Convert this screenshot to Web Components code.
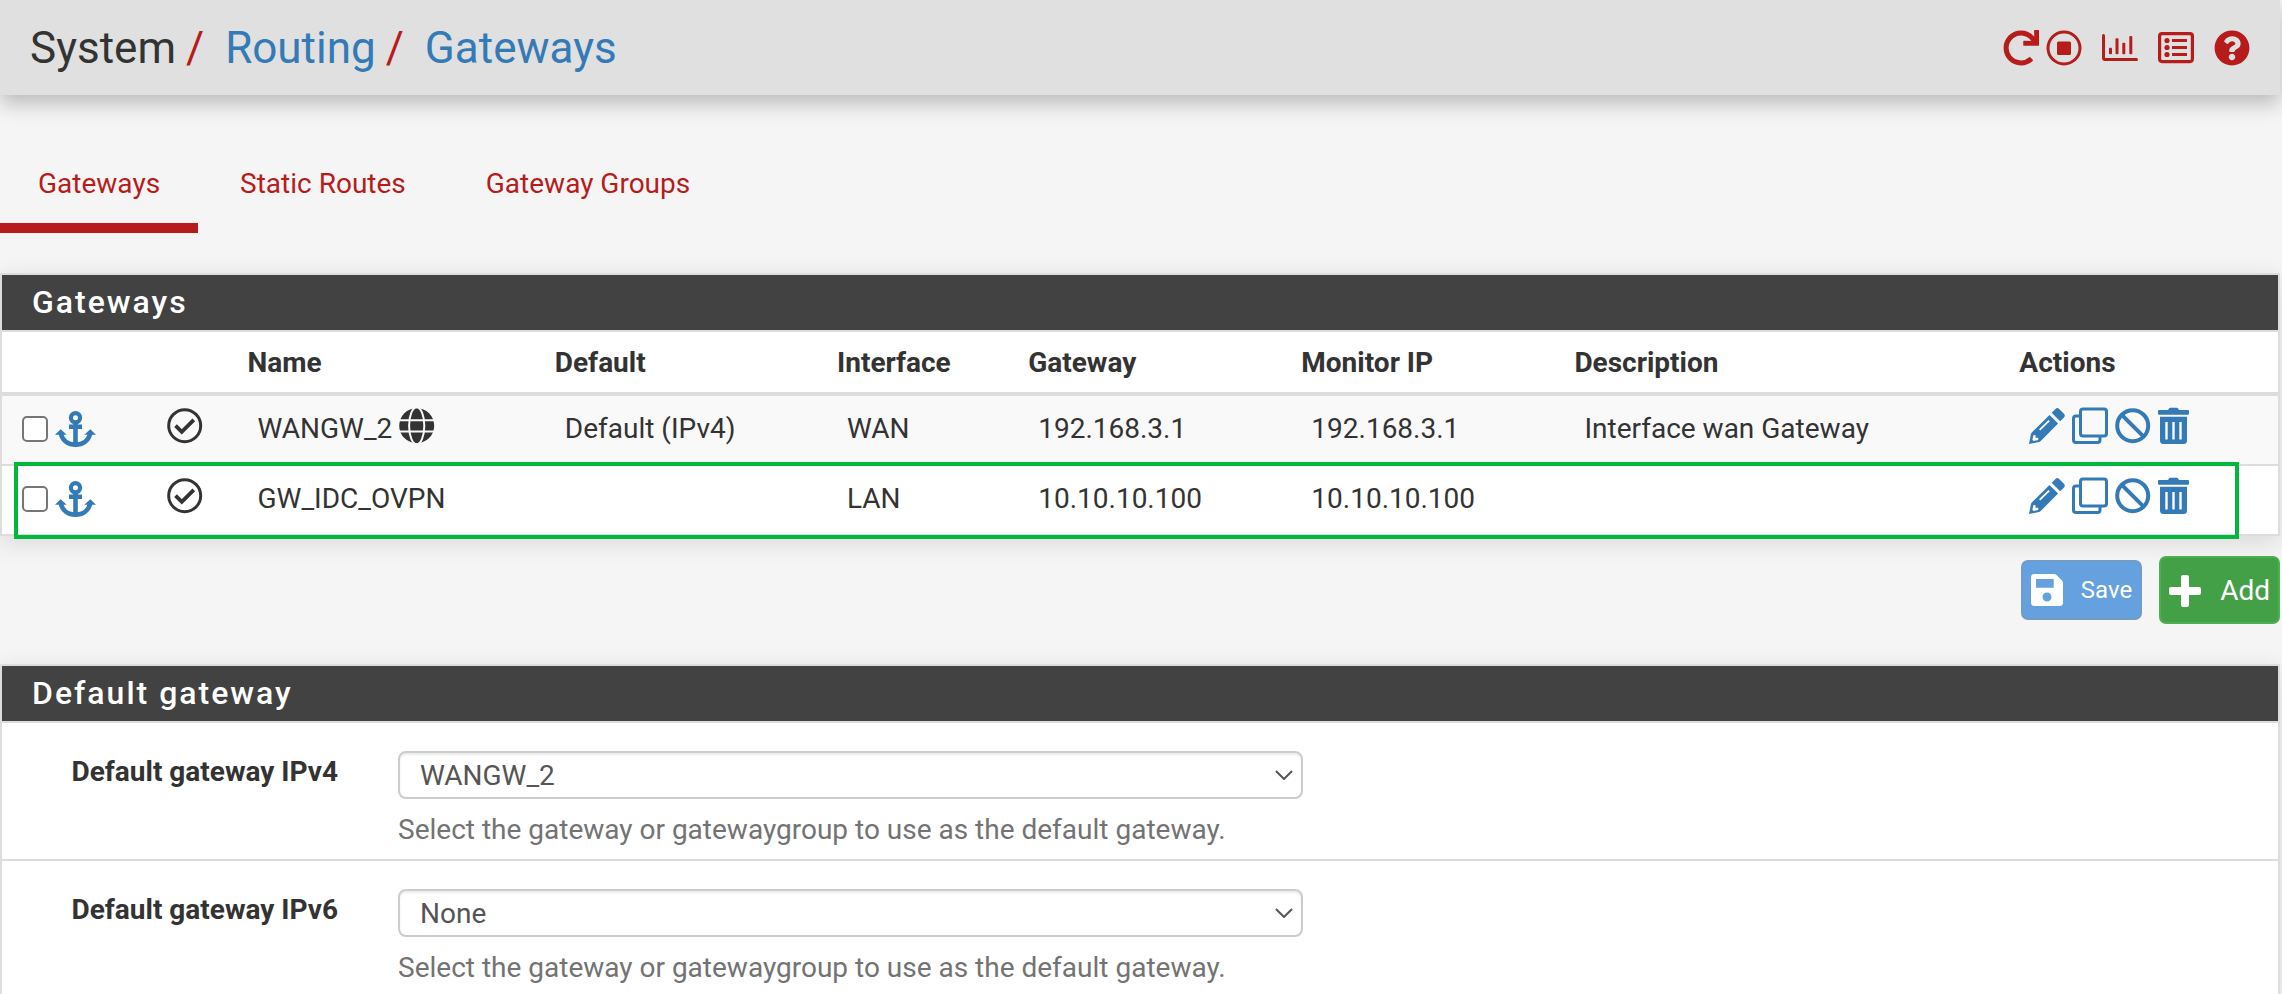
<!DOCTYPE html>
<html lang="en">
<head>
<meta charset="utf-8">
<meta name="viewport" content="width=device-width, initial-scale=1">
<title>System / Routing / Gateways</title>
<style>
  html {
    scrollbar-width: none;
  }
  body {
    margin: 0;
    padding-right: 2px;
    background: #f5f5f5;
    color: #333;
    font: 28px/42px Roboto, sans-serif;
  }
</style>
</head>
<body>
<gateways-page></gateways-page>

<script>
// Icon name -> [width, height, markup]
const ICONS = {
  redo: [36, 36, `<path transform="scale(.0703125)" d="M500.33 0h-47.41a12 12 0 0 0-12 12.57l4 82.76A247.42 247.42 0 0 0 256 8C119.34 8 7.9 119.53 8 256.19 8.1 393.07 119.1 504 256 504a247.1 247.1 0 0 0 166.18-63.91 12 12 0 0 0 .48-17.43l-34-34a12 12 0 0 0-16.38-.55A176 176 0 1 1 402.07 157.8l-101.53-4.87a12 12 0 0 0-12.57 12v47.41a12 12 0 0 0 12 12h200.33a12 12 0 0 0 12-12V12a12 12 0 0 0-12-12z"/>`],
  stop: [36, 36, `<circle cx="18" cy="18" r="16" fill="none" stroke="currentColor" stroke-width="3"/><rect x="11" y="11.500" width="14" height="13.500" rx="1.500"/>`],
  chart: [36, 36, `<path d="M0 5.500a1.500 1.500 0 0 1 3 0V28h31.500a1.500 1.500 0 0 1 0 3H3a3 3 0 0 1-3-3z"/><rect x="7" y="17.700" width="3" height="6.500" rx="1"/><rect x="13.500" y="8.300" width="3" height="16" rx="1"/><rect x="20.300" y="12.700" width="3" height="11.500" rx="1"/><rect x="27.300" y="6" width="3" height="18.200" rx="1"/>`],
  list: [36, 36, `<rect x="1.600" y="3.600" width="32.800" height="28" rx="2.500" fill="none" stroke="currentColor" stroke-width="3.200"/><circle cx="9" cy="10.500" r="2.600"/><circle cx="9" cy="17.500" r="2.600"/><circle cx="9" cy="24.500" r="2.600"/><path d="M14 9h15v3H14zM14 16h15v3H14zM14 23h15v3H14z"/>`],
  help: [36, 36, `<path transform="scale(.0703125)" d="M504 256c0 136.997-111.043 248-248 248S8 392.997 8 256C8 119.083 119.043 8 256 8s248 111.083 248 248zM262.655 90c-54.497 0-89.255 22.957-116.549 63.758-3.536 5.286-2.353 12.415 2.715 16.258l34.699 26.31c5.205 3.947 12.621 3.008 16.665-2.122 17.864-22.658 30.113-35.797 57.303-35.797 20.429 0 45.698 13.148 45.698 32.958 0 14.976-12.363 22.667-32.534 33.976C247.128 238.528 216 254.941 216 296v4c0 6.627 5.373 12 12 12h56c6.627 0 12-5.373 12-12v-1.333c0-28.462 83.186-29.647 83.186-106.667 0-58.002-60.165-102-116.531-102zM256 338c-25.365 0-46 20.635-46 46 0 25.364 20.635 46 46 46s46-20.636 46-46c0-25.365-20.635-46-46-46z"/>`],
  anchor: [41, 36, `<g fill="none" stroke="currentColor"><circle cx="20.500" cy="6.700" r="4.600" stroke-width="4.200"/><path stroke-width="4.600" d="M20.500 11v23M14 15.700h13"/><path stroke-width="4.600" d="M5.800 22.500C7.500 29.800 13.500 33.700 20.500 33.700S33.500 29.800 35.200 22.500"/></g><path d="M0 23.800l5.700-5.500 6 5.500zM29.300 23.800l6-5.500 5.700 5.500z"/>`],
  check: [36, 36, `<g fill="none" stroke="currentColor"><circle cx="17.700" cy="17.700" r="16" stroke-width="3"/><path stroke-width="3.800" d="M8.500 17.700l6.300 6.200 12-12"/></g>`],
  globe: [36, 36, `<mask id="m"><circle cx="17.700" cy="17.700" r="17.500" fill="#fff"/><g fill="none" stroke="#000" stroke-width="2"><ellipse cx="17.700" cy="17.700" rx="7.600" ry="18.500"/><path d="M0 12.200h36M0 23.400h36"/></g></mask><rect width="36" height="36" mask="url(#m)"/>`],
  pencil: [36, 36, `<path fill-rule="evenodd" d="M22.700 4.800l3.800-3.900q1.800-1.600 3.600 0L35 5.800q1.600 1.800 0 3.600l-3.800 3.900zM20.500 6.900l8.600 8.600L11.500 33.200q-.7.700-1.700.9L0 36l1.900-9.800q.2-1 .9-1.700zM10 21.300l1.300 1.300 9.500-9.400-1.300-1.300zM4.400 27.200l-1 4.600 1.200 1.100 4.600-1v-2.200H6.500v-2.700z"/>`],
  clone: [36, 36, `<g fill="none" stroke="currentColor" stroke-width="3"><rect x="8.500" y="1" width="26" height="27" rx="2.500"/><path d="M8 8H4Q1.500 8 1.500 10.500V32Q1.500 34.500 4 34.500H25.500Q28 34.500 28 32V28"/></g>`],
  ban: [36, 36, `<g fill="none" stroke="currentColor" stroke-width="4"><circle cx="17.700" cy="17.700" r="15.500"/><path d="M6.800 6.800l21.800 21.800"/></g>`],
  trash: [31, 36, `<path fill-rule="evenodd" d="M1 2h9l1-1.500Q11.400-.2 12.400-.2h6.300q1 0 1.300.7L21 2h9q1 0 1 1v2.700q0 1-1 1H1q-1 0-1-1V3q0-1 1-1zM2 8.800h27V32.500q0 3.500-3.500 3.500h-20Q2 36 2 32.500zM7.300 14v17.500h2.400V14zM14.300 14v17.500h2.400V14zM21.300 14v17.500h2.400V14z"/>`],
  save: [32, 32, `<path fill-rule="evenodd" d="M3.500 0H23q1.500 0 2.500 1l5.500 5.500q1 1 1 2.500v19.500Q32 32 28.500 32h-25Q0 32 0 28.500v-25Q0 0 3.500 0zM5 5v8.800h17.700V5zM16 18.500a4.500 4.500 0 1 0 0 9 4.500 4.500 0 0 0 0-9z"/>`],
  plus: [32, 32, `<path d="M14 0h4q2 0 2 2v10h10q2 0 2 2v4q0 2-2 2H20v10q0 2-2 2h-4q-2 0-2-2V20H2q-2 0-2-2v-4q0-2 2-2h10V2q0-2 2-2z"/>`]
};

class AppIcon extends HTMLElement {
  connectedCallback() {
    const [w, h, body] = ICONS[this.getAttribute('name')];
    this.attachShadow({ mode: 'open' }).innerHTML = `
      <style>
        :host { display: block; flex: none; }
        svg { display: block; fill: currentColor; overflow: visible; }
      </style>
      <svg width="${w}" height="${h}" viewBox="0 0 ${w} ${h}" aria-hidden="true">${body}</svg>
    `;
  }
}
customElements.define('app-icon', AppIcon);

class PageHeader extends HTMLElement {
  connectedCallback() {
    this.attachShadow({ mode: 'open' }).innerHTML = `
      <style>
        :host { display: block; }
        header {
          display: flex;
          justify-content: space-between;
          align-items: center;
          padding: 16px 30px 15px;
          background: #e0e0e0;
          box-shadow: 0 8px 20px rgba(0, 0, 0, .25);
        }
        ol {
          display: flex;
          margin: 0;
          padding: 0;
          list-style: none;
          font-size: 44px;
          line-height: 64px;
        }
        li + li::before {
          content: "/";
          padding: 0 21px 0 10px;
          color: #b71c1c;
        }
        a { color: #337ab7; text-decoration: none; }
        nav { display: flex; gap: 20px; }
        nav a { color: #b71c1c; }
        .service { display: flex; gap: 7px; }
      </style>
      <header>
        <ol>
          <li>System</li>
          <li><a href="#routing">Routing</a></li>
          <li><a href="#gateways">Gateways</a></li>
        </ol>
        <nav aria-label="Shortcuts">
          <div class="service">
            <a href="#restart" aria-label="Restart service"><app-icon name="redo"></app-icon></a>
            <a href="#stop" aria-label="Stop service"><app-icon name="stop"></app-icon></a>
          </div>
          <a href="#status" aria-label="Status"><app-icon name="chart"></app-icon></a>
          <a href="#logs" aria-label="Logs"><app-icon name="list"></app-icon></a>
          <a href="#help" aria-label="Help"><app-icon name="help"></app-icon></a>
        </nav>
      </header>
    `;
  }
}
customElements.define('page-header', PageHeader);

class TabBar extends HTMLElement {
  connectedCallback() {
    this.attachShadow({ mode: 'open' }).innerHTML = `
      <style>
        :host { display: flex; gap: 4px; }
        ::slotted(a) {
          padding: 20px 38px 18px;
          border-bottom: 10px solid transparent;
          color: #b71c1c;
          text-decoration: none;
        }
        ::slotted(a[aria-current]) { border-color: #b71c1c; }
      </style>
      <slot></slot>
    `;
  }
}
customElements.define('tab-bar', TabBar);

class AppPanel extends HTMLElement {
  connectedCallback() {
    this.attachShadow({ mode: 'open' }).innerHTML = `
      <style>
        :host {
          display: block;
          border: 2px solid #ddd;
          background: #fff;
          box-shadow: 0 6px 24px rgba(0, 0, 0, .12);
        }
        h2 {
          margin: 0;
          padding: 7px 30px 8px;
          border-bottom: 2px solid #ddd;
          background: #424242;
          color: #fff;
          font-size: 32px;
          font-weight: 500;
          line-height: 40px;
          letter-spacing: 2px;
        }
      </style>
      <h2>${this.getAttribute('heading')}</h2>
      <slot></slot>
    `;
  }
}
customElements.define('app-panel', AppPanel);

class GatewayTable extends HTMLElement {
  constructor() {
    super();
    this.attachShadow({ mode: 'open' });
    this.widths = [6.35, 4, 13.5, 12.4, 8.4, 12, 12, 19.55, 11.8];
    this.rows = [
      { name: 'WANGW_2', isDefault: true, def: 'Default (IPv4)', iface: 'WAN', gateway: '192.168.3.1', monitor: '192.168.3.1', descr: 'Interface wan Gateway' },
      { name: 'GW_IDC_OVPN', def: '', iface: 'LAN', gateway: '10.10.10.100', monitor: '10.10.10.100', descr: '', marked: true }
    ];
  }

  connectedCallback() {
    this.render();
  }

  renderRow(row) {
    const actions = [['pencil', 'Edit'], ['clone', 'Copy'], ['ban', 'Disable'], ['trash', 'Delete']];
    return `
      <tr class="${row.marked ? 'marked' : ''}">
        <td>
          <div class="line middle">
            <input type="checkbox" aria-label="Select ${row.name}">
            <a href="#move" aria-label="Move ${row.name}"><app-icon name="anchor"></app-icon></a>
          </div>
        </td>
        <td><div class="line"><app-icon name="check"></app-icon></div></td>
        <td><div class="line">${row.name}${row.isDefault ? '<app-icon name="globe"></app-icon>' : ''}</div></td>
        <td>${row.def}</td>
        <td>${row.iface}</td>
        <td>${row.gateway}</td>
        <td>${row.monitor}</td>
        <td>${row.descr}</td>
        <td>
          <div class="line">
            ${actions.map(([icon, label]) => `<a href="#${icon}" aria-label="${label} ${row.name}"><app-icon name="${icon}"></app-icon></a>`).join('')}
          </div>
        </td>
      </tr>
    `;
  }

  render() {
    this.shadowRoot.innerHTML = `
      <style>
        :host { display: block; }
        table {
          width: 100%;
          table-layout: fixed;
          border-spacing: 0;
        }
        th {
          padding: 10px 10px 8px;
          border-bottom: 4px solid #ddd;
          font-weight: 700;
          text-align: left;
        }
        td {
          padding: 12px 0 14px 20px;
          white-space: nowrap;
        }
        tr:nth-child(odd) td { background: #f9f9f9; }
        tr + tr td { border-top: 2px solid #ddd; }
        tr.marked { position: relative; }
        /* green frame drawn over the marked row */
        tr.marked td:first-child::after {
          content: "";
          position: absolute;
          inset: -2px 39px -5px 12px;
          border: 4px solid #00b93c;
          pointer-events: none;
        }
        .line { display: flex; gap: 7px; height: 42px; }
        .middle { align-items: center; }
        a { color: #337ab7; }
        input {
          appearance: none;
          box-sizing: border-box;
          width: 26px;
          height: 26px;
          margin: 0;
          border: 2px solid #767676;
          border-radius: 5px;
          background: #fff;
        }
      </style>
      <table>
        <colgroup>${this.widths.map(w => `<col style="width: ${w}%">`).join('')}</colgroup>
        <thead>
          <tr>
            <th></th>
            <th></th>
            <th>Name</th>
            <th>Default</th>
            <th>Interface</th>
            <th>Gateway</th>
            <th>Monitor IP</th>
            <th>Description</th>
            <th>Actions</th>
          </tr>
        </thead>
        <tbody>${this.rows.map(row => this.renderRow(row)).join('')}</tbody>
      </table>
    `;
  }
}
customElements.define('gateway-table', GatewayTable);

class ActionButton extends HTMLElement {
  connectedCallback() {
    this.attachShadow({ mode: 'open' }).innerHTML = `
      <style>
        :host { display: block; }
        button {
          display: flex;
          align-items: center;
          gap: 19px;
          padding: 12px 8px 10px;
          border: 2px solid #4caf50;
          border-radius: 7px;
          background: #43a047;
          color: #fff;
          font: inherit;
        }
        :host([kind="save"]) button {
          gap: 18px;
          padding: 10px 8px;
          border-color: #729bc6;
          background: #66a1df;
          font-size: 24px;
          line-height: 36px;
        }
      </style>
      <button type="button"><app-icon name="${this.getAttribute('icon')}"></app-icon><slot></slot></button>
    `;
  }
}
customElements.define('action-button', ActionButton);

class SelectField extends HTMLElement {
  connectedCallback() {
    this.attachShadow({ mode: 'open' }).innerHTML = `
      <style>
        :host {
          display: grid;
          grid-template-columns: 2fr 5fr 5fr;
          padding: 28px 8px 8px 0;
        }
        :host(:not(:first-of-type)) { border-top: 2px solid #ddd; }
        label {
          padding-right: 42px;
          font-weight: 700;
          text-align: right;
        }
        .control { padding: 0 22px 0 18px; }
        .box { display: grid; align-items: center; }
        select, .box svg { grid-area: 1 / 1; }
        select {
          appearance: none;
          box-sizing: border-box;
          width: 100%;
          height: 48px;
          padding: 2px 20px 0;
          border: 2px solid #ccc;
          border-radius: 8px;
          background: #fff;
          box-shadow: inset 0 2px 2px rgba(0, 0, 0, .08);
          color: #555;
          font: inherit;
        }
        .box svg {
          justify-self: end;
          margin-right: 10px;
          pointer-events: none;
        }
        p { margin: 10px 0 0; color: #737373; }
      </style>
      <label for="field">${this.getAttribute('label')}</label>
      <div class="control">
        <div class="box">
          <select id="field" aria-describedby="hint"><option>${this.getAttribute('value')}</option></select>
          <svg width="18" height="10" viewBox="0 0 18 10" fill="none" stroke="#555" stroke-width="2" aria-hidden="true"><path d="M1 1l8 8 8-8"/></svg>
        </div>
        <p id="hint"><slot></slot></p>
      </div>
    `;
  }
}
customElements.define('select-field', SelectField);

class GatewaysPage extends HTMLElement {
  connectedCallback() {
    this.attachShadow({ mode: 'open' }).innerHTML = `
      <style>
        :host { display: block; }
        tab-bar { margin: 48px 0 40px; }
        .buttons {
          display: flex;
          justify-content: flex-end;
          align-items: center;
          gap: 17px;
          margin: 20px 0 40px;
        }
      </style>
      <page-header></page-header>
      <tab-bar>
        <a href="#gateways" aria-current="page">Gateways</a>
        <a href="#static-routes">Static Routes</a>
        <a href="#gateway-groups">Gateway Groups</a>
      </tab-bar>
      <app-panel heading="Gateways"><gateway-table></gateway-table></app-panel>
      <div class="buttons">
        <action-button kind="save" icon="save">Save</action-button>
        <action-button icon="plus">Add</action-button>
      </div>
      <app-panel heading="Default gateway">
        <select-field label="Default gateway IPv4" value="WANGW_2">Select the gateway or gatewaygroup to use as the default gateway.</select-field>
        <select-field label="Default gateway IPv6" value="None">Select the gateway or gatewaygroup to use as the default gateway.</select-field>
      </app-panel>
    `;
  }
}
customElements.define('gateways-page', GatewaysPage);
</script>
</body>
</html>
